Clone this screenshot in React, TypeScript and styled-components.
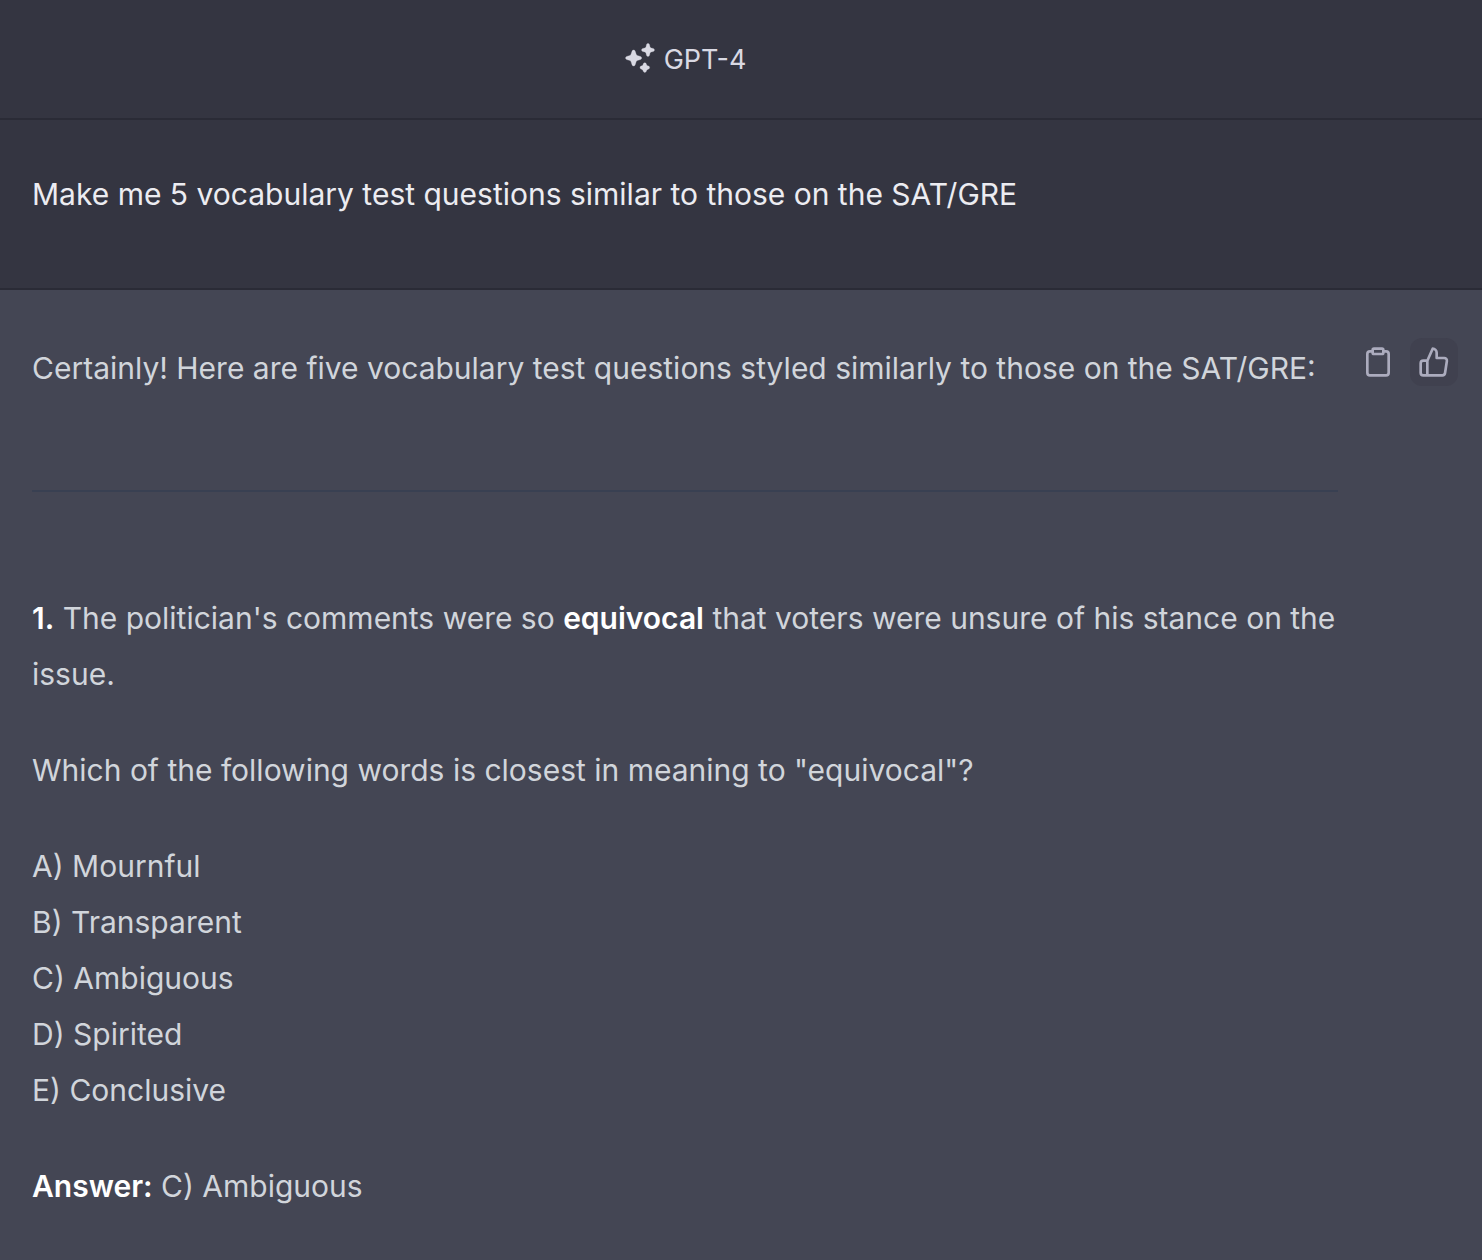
import React from "react";
import styled, { createGlobalStyle } from "styled-components";

const Global = createGlobalStyle`
  *, *::before, *::after { box-sizing: border-box; }
  body {
    margin: 0;
    background: #444654;
    color: #d1d5db;
    font-family: Inter, "Liberation Sans", sans-serif;
    font-size: 30px;
    line-height: 56px;
  }
`;

const ModelBar = styled.header`
  display: flex;
  align-items: center;
  justify-content: center;
  gap: 8px;
  height: 120px;
  padding: 2px 112px 0 0;
  background: #343541;
  border-bottom: 2px solid #2a2b36;
  color: #d9d9e3;
  font-size: 27px;
  line-height: 40px;
`;

const SparkleIcon = styled.svg`
  width: 32px;
  height: 32px;
  overflow: visible;
  fill: currentColor;
  stroke: currentColor;
  stroke-width: 0.15;
`;

const UserTurn = styled.section`
  padding: 46px 32px 66px;
  background: #343541;
  border-bottom: 2px solid #2a2b36;
  color: #ececf1;
`;

const AssistantTurn = styled.section`
  display: flex;
  align-items: flex-start;
  gap: 16px;
  padding: 48px 24px 0 32px;
`;

const Paragraph = styled.p`
  margin: 0 0 40px;
`;

const Answer = styled.article`
  flex: 1;
  min-width: 0;
  padding-top: 2px;
`;

const Divider = styled.hr`
  margin: 94px 0 98px;
  border: 0;
  border-top: 2px solid #394052;
`;

const Strong = styled.strong`
  color: #fff;
  font-weight: 600;
`;

const Actions = styled.div`
  display: flex;
  gap: 8px;
`;

const ActionButton = styled.button<{ $active?: boolean }>`
  display: flex;
  align-items: center;
  justify-content: center;
  width: 48px;
  height: 48px;
  padding: 0;
  border: 0;
  border-radius: 12px;
  background: ${(p) => (p.$active ? "#40414f" : "transparent")};
  color: #acacbe;
  cursor: pointer;
`;

const options = ["A) Mournful", "B) Transparent", "C) Ambiguous", "D) Spirited", "E) Conclusive"];

export default function App() {
  return (
    <>
      <Global />
      <ModelBar>
        <SparkleIcon viewBox="0 1 16 16" aria-hidden="true">
          <path d="M12.784 1.442a.8.8 0 0 0-1.569 0l-.191.953a.8.8 0 0 1-.628.628l-.953.19a.8.8 0 0 0 0 1.57l.953.19a.8.8 0 0 1 .628.629l.19.953a.8.8 0 0 0 1.57 0l.19-.953a.8.8 0 0 1 .629-.628l.953-.19a.8.8 0 0 0 0-1.57l-.953-.19a.8.8 0 0 1-.628-.629l-.19-.953h-.002ZM5.559 4.546a.8.8 0 0 0-1.519 0l-.546 1.64a.8.8 0 0 1-.507.507l-1.64.546a.8.8 0 0 0 0 1.519l1.64.547a.8.8 0 0 1 .507.505l.546 1.641a.8.8 0 0 0 1.519 0l.546-1.64a.8.8 0 0 1 .506-.507l1.641-.546a.8.8 0 0 0 0-1.519l-1.64-.546a.8.8 0 0 1-.507-.506L5.56 4.546Zm5.6 6.4a.8.8 0 0 0-1.519 0l-.147.44a.8.8 0 0 1-.505.507l-.441.146a.8.8 0 0 0 0 1.519l.44.146a.8.8 0 0 1 .507.506l.146.441a.8.8 0 0 0 1.519 0l.147-.44a.8.8 0 0 1 .506-.507l.44-.146a.8.8 0 0 0 0-1.519l-.44-.147a.8.8 0 0 1-.507-.505l-.146-.441Z" />
        </SparkleIcon>
        <span>GPT-4</span>
      </ModelBar>
      <main>
        <UserTurn>Make me 5 vocabulary test questions similar to those on the SAT/GRE</UserTurn>
        <AssistantTurn>
          <Answer>
            <Paragraph>Certainly! Here are five vocabulary test questions styled similarly to those on the SAT/GRE:</Paragraph>
            <Divider />
            <Paragraph>
              <Strong>1.</Strong> The politician's comments were so <Strong>equivocal</Strong> that voters were unsure of his stance on the issue.
            </Paragraph>
            <Paragraph>Which of the following words is closest in meaning to "equivocal"?</Paragraph>
            <Paragraph>
              {options.map((o, i) => (
                <React.Fragment key={o}>
                  {i > 0 && <br />}
                  {o}
                </React.Fragment>
              ))}
            </Paragraph>
            <Paragraph>
              <Strong>Answer:</Strong> C) Ambiguous
            </Paragraph>
          </Answer>
          <Actions>
            <ActionButton aria-label="Copy">
              <svg width="32" height="32" viewBox="0 0 24 24" fill="none" stroke="currentColor" strokeWidth="2" strokeLinecap="round" strokeLinejoin="round">
                <path d="M16 4h2a2 2 0 0 1 2 2v14a2 2 0 0 1-2 2H6a2 2 0 0 1-2-2V6a2 2 0 0 1 2-2h2" />
                <rect x="8" y="2" width="8" height="4" rx="1" />
              </svg>
            </ActionButton>
            <ActionButton $active aria-label="Good response">
              <svg width="32" height="32" viewBox="0 0 24 24" fill="none" stroke="currentColor" strokeWidth="2" strokeLinecap="round" strokeLinejoin="round">
                <path d="M14 9V5a3 3 0 0 0-3-3l-4 9v11h11.28a2 2 0 0 0 2-1.7l1.38-9a2 2 0 0 0-2-2.3zM7 22H4a2 2 0 0 1-2-2v-7a2 2 0 0 1 2-2h3" />
              </svg>
            </ActionButton>
          </Actions>
        </AssistantTurn>
      </main>
    </>
  );
}
